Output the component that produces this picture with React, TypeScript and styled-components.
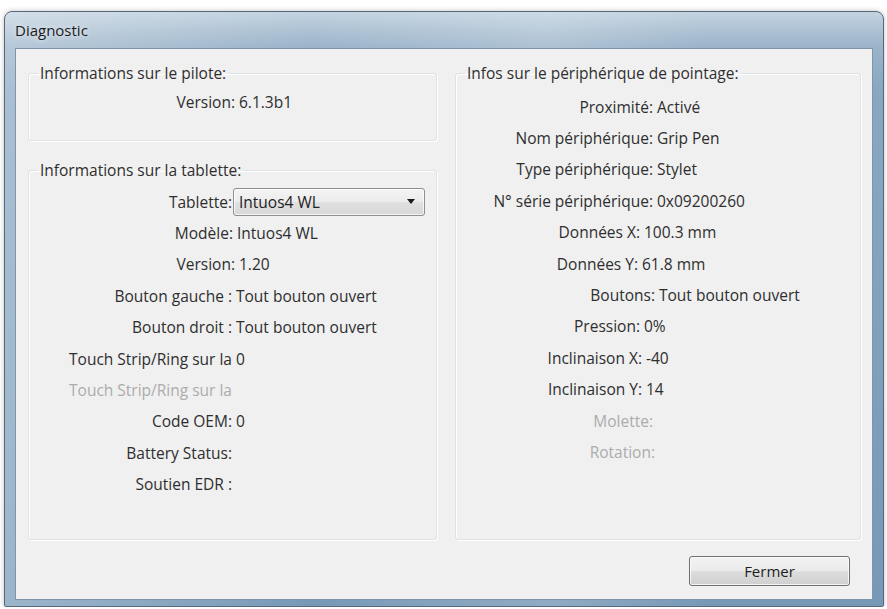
import React from 'react';
import styled, { createGlobalStyle } from 'styled-components';

const GlobalStyle = createGlobalStyle`
  html, body {
    margin: 0;
    padding: 0;
    background: #ffffff;
  }
  body {
    font-family: "Open Sans", "Noto Sans", sans-serif;
    font-size: 15.5px;
    color: #2e2e2e;
  }
`;

const Window = styled.div`
  margin: 11px 0 0 4px;
  width: 880px;
  height: 596px;
  box-sizing: border-box;
  border: 1px solid #56687a;
  border-radius: 8px 8px 2px 2px;
  background:
    linear-gradient(90deg, rgba(255, 255, 255, 0.28) 0%, rgba(255, 255, 255, 0) 35%, rgba(255, 255, 255, 0.18) 62%, rgba(255, 255, 255, 0) 80%),
    linear-gradient(180deg, #c3d3e0 0px, #adc2d4 18px, #9ab3c9 36px, #89a7c1 80px, #7799b7 100%);
  box-shadow: 0 0 5px rgba(0, 0, 0, 0.25);
  display: flex;
  flex-direction: column;
  padding-bottom: 6px;
`;

const TitleBar = styled.div`
  height: 36px;
  flex: none;
  display: flex;
  align-items: center;
  padding-left: 10px;
  font-size: 15px;
  color: #1c1c1c;
  text-shadow: 0 0 6px rgba(255, 255, 255, 0.9);
`;

const Client = styled.div`
  flex: 1;
  margin: 0 10px;
  background: #f0f0f0;
  border: 1px solid #7f95a9;
  display: flex;
  flex-direction: column;
  padding: 15px 11px 0 12px;
`;

const Columns = styled.div`
  display: grid;
  grid-template-columns: 409px 406px;
  column-gap: 18px;
  height: 476px;
`;

const Stack = styled.div`
  display: flex;
  flex-direction: column;
  gap: 20px;
`;

const Group = styled.fieldset<{ $grow?: boolean; $height?: number; $top: number }>`
  margin: 0;
  padding: ${p => p.$top}px 0 0 0;
  min-width: 0;
  border: 1px solid #dde2e5;
  border-radius: 3px;
  box-shadow: inset 1px 1px 0 #ffffff, 1px 1px 0 #ffffff;
  box-sizing: border-box;
  ${p => (p.$grow ? 'flex: 1;' : '')}
  ${p => (p.$height ? `height: ${p.$height}px;` : '')}
`;

const Legend = styled.legend`
  margin-left: 9px;
  padding: 0 2px;
  line-height: 18px;
  color: #2e2e2e;
`;

const Row = styled.div<{ $label: number }>`
  display: grid;
  grid-template-columns: ${p => p.$label}px 1fr;
  column-gap: 4px;
  align-items: center;
  height: 31.4px;
  white-space: nowrap;
`;

const Label = styled.span<{ $muted?: boolean }>`
  text-align: right;
  color: ${p => (p.$muted ? '#acacac' : '#2e2e2e')};
`;

const Value = styled.span`
  color: #2e2e2e;
`;

const Combo = styled.div`
  margin-left: -3px;
  width: 192px;
  height: 28px;
  box-sizing: border-box;
  border: 1px solid #8e8f8f;
  border-radius: 3px;
  background: linear-gradient(180deg, #f4f4f4 0%, #ececec 48%, #e0e0e0 52%, #d8d8d8 100%);
  box-shadow: inset 0 0 0 1px rgba(255, 255, 255, 0.7);
  display: flex;
  align-items: center;
  justify-content: space-between;
  padding: 0 9px 0 5px;
  color: #222222;
`;

const Arrow = styled.span`
  width: 0;
  height: 0;
  border-left: 4px solid transparent;
  border-right: 4px solid transparent;
  border-top: 5px solid #1a1a1a;
`;

const Footer = styled.div`
  display: flex;
  justify-content: flex-end;
  padding: 16px 0 0;
`;

const Button = styled.button`
  width: 161px;
  height: 30px;
  margin-right: 11px;
  border: 1px solid #707070;
  border-radius: 3px;
  background: linear-gradient(180deg, #f2f2f2 0%, #ebebeb 48%, #dddddd 52%, #cfcfcf 100%);
  box-shadow: inset 0 0 0 1px rgba(255, 255, 255, 0.75);
  font-family: "Open Sans", "Noto Sans", sans-serif;
  font-size: 15px;
  color: #1e1e1e;
  padding: 0;
`;

type Item = { label: string; value?: string; muted?: boolean; shift?: number };

const pilote: Item[] = [{ label: 'Version:', value: '6.1.3b1', shift: -3 }];

const tablette: Item[] = [
  { label: 'Modèle:', value: 'Intuos4 WL', shift: -1 },
  { label: 'Version:', value: '1.20', shift: -3 },
  { label: 'Bouton gauche :', value: 'Tout bouton ouvert' },
  { label: 'Bouton droit :', value: 'Tout bouton ouvert' },
  { label: 'Touch Strip/Ring sur la', value: '0' },
  { label: 'Touch Strip/Ring sur la', muted: true },
  { label: 'Code OEM:', value: '0' },
  { label: 'Battery Status:' },
  { label: 'Soutien EDR :' },
];

const pointage: Item[] = [
  { label: 'Proximité:', value: 'Activé' },
  { label: 'Nom périphérique:', value: 'Grip Pen' },
  { label: 'Type périphérique:', value: 'Stylet' },
  { label: 'N° série périphérique:', value: '0x09200260' },
  { label: 'Données X:', value: '100.3 mm', shift: 13 },
  { label: 'Données Y:', value: '61.8 mm', shift: 15 },
  { label: 'Boutons:', value: 'Tout bouton ouvert', shift: -2 },
  { label: 'Pression:', value: '0%', shift: 13 },
  { label: 'Inclinaison X:', value: '-40', shift: 11 },
  { label: 'Inclinaison Y:', value: '14', shift: 11 },
  { label: 'Molette:', muted: true },
  { label: 'Rotation:', muted: true, shift: -2 },
];

const renderRows = (items: Item[], base: number) =>
  items.map((item, i) => (
    <Row key={i} $label={base - (item.shift || 0)}>
      <Label $muted={item.muted}>{item.label}</Label>
      {item.value ? <Value>{item.value}</Value> : <span />}
    </Row>
  ));

export default function App() {
  return (
    <>
      <GlobalStyle />
      <Window>
        <TitleBar>Diagnostic</TitleBar>
        <Client>
          <Columns>
            <Stack>
              <Group $height={77} $top={4}>
                <Legend>Informations sur le pilote:</Legend>
                {renderRows(pilote, 203)}
              </Group>
              <Group $grow $top={7}>
                <Legend>Informations sur la tablette:</Legend>
                <Row $label={203}>
                  <Label>Tablette:</Label>
                  <Combo>
                    <span>Intuos4 WL</span>
                    <Arrow />
                  </Combo>
                </Row>
                {renderRows(tablette, 203)}
              </Group>
            </Stack>
            <Group $top={9}>
              <Legend>Infos sur le périphérique de pointage:</Legend>
              {renderRows(pointage, 197)}
            </Group>
          </Columns>
          <Footer>
            <Button>Fermer</Button>
          </Footer>
        </Client>
      </Window>
    </>
  );
}
